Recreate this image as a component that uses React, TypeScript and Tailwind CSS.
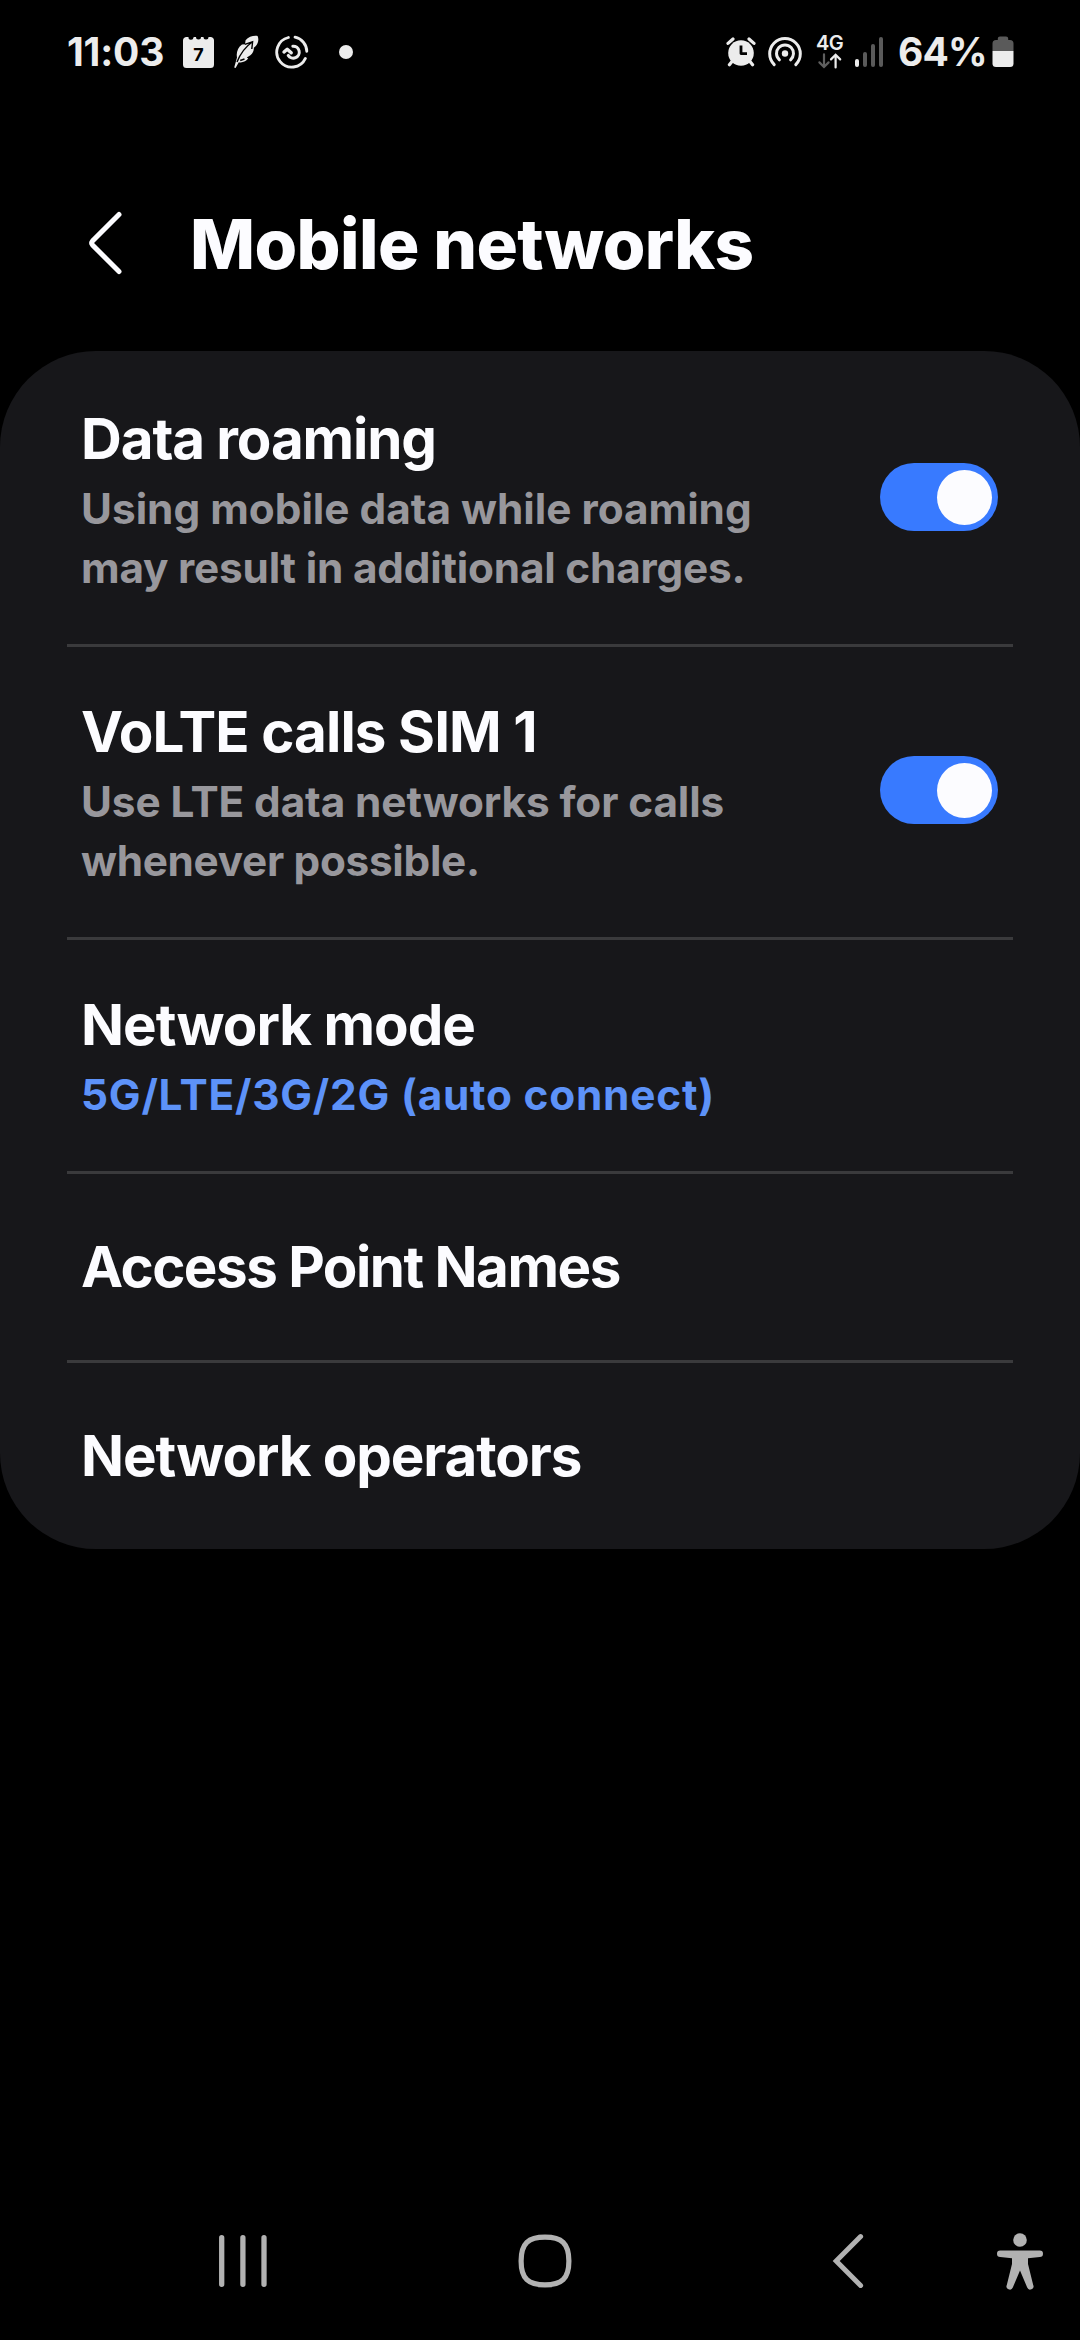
type Row = {
  title: string;
  titleClass: string;
  lines?: { text: string; className: string }[];
  height: string;
  toggle?: boolean;
};

const rows: Row[] = [
  {
    title: "Data roaming",
    titleClass: "tracking-[-1.1px]",
    lines: [
      { text: "Using mobile data while roaming", className: "text-[#98979c]" },
      {
        text: "may result in additional charges.",
        className: "text-[#98979c] tracking-[-0.2px]",
      },
    ],
    height: "h-[293px] pt-[54px]",
    toggle: true,
  },
  {
    title: "VoLTE calls SIM 1",
    titleClass: "tracking-[-0.9px]",
    lines: [
      {
        text: "Use LTE data networks for calls",
        className: "text-[#98979c] tracking-[-0.1px]",
      },
      {
        text: "whenever possible.",
        className: "text-[#98979c] tracking-[-0.3px]",
      },
    ],
    height: "h-[293px] pt-[54px]",
    toggle: true,
  },
  {
    title: "Network mode",
    titleClass: "tracking-[-1px]",
    lines: [
      {
        text: "5G/LTE/3G/2G (auto connect)",
        className: "text-[#5d92f8] tracking-[0.8px]",
      },
    ],
    height: "h-[234px] pt-[54px]",
  },
  {
    title: "Access Point Names",
    titleClass: "tracking-[-1.5px]",
    height: "h-[189px] pt-[62px]",
  },
  {
    title: "Network operators",
    titleClass: "tracking-[-1.1px]",
    height: "h-[189px] pt-[62px]",
  },
];

function Toggle() {
  return (
    <div className="mt-[58px] flex h-[68px] w-[118px] shrink-0 items-center justify-end rounded-full bg-[#387aff] pr-[6px]">
      <div className="h-[55px] w-[55px] rounded-full bg-[#fcfcff]" />
    </div>
  );
}

function StatusBar() {
  return (
    <div className="flex h-[104px] shrink-0 items-center pl-[67px] pr-[66px] text-[#ececec]">
      <span className="w-[116px] whitespace-nowrap text-[39px] font-bold leading-[104px] tracking-[-0.2px]">
        11:03
      </span>

      {/* calendar */}
      <div className="relative h-[31px] w-[31px]">
        <svg width="31" height="31" viewBox="0 0 31 31">
          <path
            d="M3 0H5.5A2.5 2.5 0 0 0 10.5 0.6L10.8 0H13A2.5 2.5 0 0 0 18 0H20.5A2.5 2.5 0 0 0 25.5 0H28Q31 0.5 31 3.5V27.5Q31 31 27.5 31H3.5Q0 31 0 27.5V3.5Q0 0.5 3 0Z"
            fill="#ececec"
          />
        </svg>
        <span className="absolute inset-x-0 top-[9px] text-center text-[18px] font-bold leading-[18px] text-black">
          7
        </span>
      </div>

      {/* feather */}
      <svg className="ml-[20px]" width="25" height="34" viewBox="0 0 25 34">
        <path
          d="M23.6 1C19.5 0.4 14.4 1.8 11.6 5.2L11 9.2L8 9.4C3.8 12.4 2 17.5 3 22.5L0.2 32.6L1.6 33L4.8 27.2C8 28 12.5 26.5 14.2 23.6L12.8 22.4L16.4 20.2C19 17.8 20 15.2 19.8 12.8L21.6 11.2C24.4 8.2 25 4 23.6 1Z"
          fill="#ececec"
        />
        <path
          d="M3 27C6 19.5 11 12.2 18.5 6.8M10.8 9.4L18.6 6.8L17.8 14M6.2 25.5L10.5 24"
          fill="none"
          stroke="#000"
          strokeWidth="1.4"
        />
      </svg>

      {/* sync ring */}
      <svg className="ml-[16px]" width="34" height="34" viewBox="0 0 34 34">
        <g fill="none" stroke="#ececec" strokeWidth="2.8" strokeLinecap="round">
          <path d="M20 2.2A14.8 14.8 0 0 1 31.8 16.4" />
          <path d="M30.4 23.4A15 15 0 1 1 13.4 2.5" />
          <path d="M17.8 11.2A6 6 0 1 1 13.2 20.4" strokeWidth="3" />
          <path d="M9 17L12.2 14.2L16.2 17.8" strokeWidth="3.4" strokeLinejoin="round" />
        </g>
      </svg>

      <div className="ml-[30px] h-[14px] w-[14px] rounded-full bg-[#ececec]" />

      <div className="ml-auto flex items-center">
        {/* alarm */}
        <svg width="30" height="30" viewBox="0 0 30 30">
          <circle cx="15" cy="16" r="12.8" fill="#ececec" />
          <g fill="none" stroke="#ececec" strokeWidth="3.2" strokeLinecap="round">
            <path d="M2 6.4L7 2M28 6.4L23 2M6 24.5L3.4 27.8M24 24.5L26.6 27.8" />
          </g>
          <path d="M15 8.6V16.6H21" fill="none" stroke="#000" strokeWidth="2.8" strokeLinejoin="round" />
        </svg>

        {/* hotspot */}
        <svg className="ml-[12px]" width="34" height="32" viewBox="0 0 34 32">
          <circle cx="17" cy="17.5" r="3.2" fill="#ececec" />
          <g fill="none" stroke="#ececec" strokeWidth="3" strokeLinecap="round">
            <path d="M6.2 28.6A15.3 15.3 0 1 1 27.8 28.6" />
            <path d="M11.4 23.8A8.5 8.5 0 1 1 22.6 23.8" />
          </g>
        </svg>

        {/* 4G with up / down arrows */}
        <div className="ml-[14px] flex w-[27px] flex-col items-center">
          <span className="whitespace-nowrap text-[20px] font-semibold leading-[16px] tracking-[-0.6px]">
            4G
          </span>
          <svg className="mt-[2px]" width="26" height="16" viewBox="0 0 26 16">
            <g fill="none" strokeWidth="2.2" strokeLinecap="round">
              <path d="M7 1.4V13.6M2.4 9.4L7 14L11.6 9.4" stroke="#5f5f5f" />
              <path d="M18.6 14.4V2.4M14 6.4L18.6 1.8L23.2 6.4" stroke="#ececec" />
            </g>
          </svg>
        </div>

        {/* signal strength */}
        <div className="ml-[12px] flex h-[30px] items-end gap-[4px]">
          <div className="h-[8px] w-[4px] rounded-full bg-[#ececec]" />
          <div className="h-[15px] w-[4px] rounded-full bg-[#5a5a5a]" />
          <div className="h-[23px] w-[4px] rounded-full bg-[#5a5a5a]" />
          <div className="h-[30px] w-[4px] rounded-full bg-[#5a5a5a]" />
        </div>

        <span className="ml-[15px] w-[94px] whitespace-nowrap text-[39px] font-bold leading-[104px] tracking-[-0.8px]">
          64%
        </span>

        {/* battery */}
        <svg width="22" height="32" viewBox="0 0 22 32">
          <path
            d="M0.5 15V7.5Q0.5 4 4 4H5.8V2.5Q5.8 0.5 8 0.5H14Q16.2 0.5 16.2 2.5V4H18Q21.5 4 21.5 7.5V15Z"
            fill="#5a5a5a"
          />
          <path d="M0.5 15H21.5V27.5Q21.5 31 18 31H4Q0.5 31 0.5 27.5Z" fill="#ececec" />
        </svg>
      </div>
    </div>
  );
}

function NavBar() {
  return (
    <div className="mt-auto mb-[46px] flex h-[66px] shrink-0 items-center pl-[218px]">
      <svg width="49" height="52" viewBox="0 0 49 52">
        <path
          d="M3.7 2.7V49.3M24.9 2.7V49.3M46 2.7V49.3"
          stroke="#b2b2b2"
          strokeWidth="5.3"
          strokeLinecap="round"
        />
      </svg>
      <svg className="ml-[251px]" width="54" height="54" viewBox="0 0 54 54">
        <path
          d="M27 3.1C43.5 3.1 50.9 9 50.9 27S43.5 50.9 27 50.9S3.1 45 3.1 27S10.5 3.1 27 3.1Z"
          fill="none"
          stroke="#b2b2b2"
          strokeWidth="5.2"
        />
      </svg>
      <svg className="ml-[260px]" width="32" height="56" viewBox="0 0 32 56">
        <path
          d="M28.6 3.6L4.2 28L28.6 52.4"
          fill="none"
          stroke="#b2b2b2"
          strokeWidth="5"
          strokeLinecap="round"
        />
      </svg>
      <svg className="ml-[132px]" width="48" height="58" viewBox="0 0 48 58">
        <circle cx="24" cy="8" r="6.8" fill="#b2b2b2" />
        <path
          d="M4.2 18.6H43.8A3.2 3.2 0 0 1 43.8 25L32 26.2V32L37.2 53A3.1 3.1 0 0 1 31.2 55.6L24 38.4L16.8 55.6A3.1 3.1 0 0 1 10.8 53L16 32V26.2L4.2 25A3.2 3.2 0 0 1 4.2 18.6Z"
          fill="#b2b2b2"
        />
      </svg>
    </div>
  );
}

export default function App() {
  return (
    <div className="flex h-[2340px] w-[1080px] flex-col overflow-hidden bg-black font-['Inter',sans-serif]">
      <StatusBar />

      <div className="flex h-[247px] shrink-0 items-start pl-[87px] pt-[98px]">
        <svg className="mt-[8px]" width="36" height="66" viewBox="0 0 36 66">
          <path
            d="M32 4.5L5.5 31Q3.8 33 5.5 35L32 61.5"
            fill="none"
            stroke="#fcfcff"
            strokeWidth="5"
            strokeLinecap="round"
          />
        </svg>
        <h1 className="ml-[67px] whitespace-nowrap text-[69px] font-extrabold leading-[84px] tracking-[-0.6px] text-[#fcfcff]">
          Mobile networks
        </h1>
      </div>

      <div className="h-[1198px] shrink-0 rounded-[96px] bg-[#17171a]">
        {rows.map((row, i) => (
          <div key={row.title}>
            {i > 0 && (
              <div className="mx-[67px] -mb-[3px] h-[3px] bg-[#3a3a3c]" />
            )}
            <div className={"flex items-start justify-between pl-[81px] pr-[82px] " + row.height}>
              <div className="whitespace-nowrap font-bold">
                <div className={"text-[56.5px] leading-[68px] text-[#fcfcff] " + row.titleClass}>
                  {row.title}
                </div>
                {row.lines && (
                  <div className="mt-[6px] text-[42.3px] leading-[59px]">
                    {row.lines.map((line) => (
                      <div key={line.text} className={line.className}>
                        {line.text}
                      </div>
                    ))}
                  </div>
                )}
              </div>
              {row.toggle && <Toggle />}
            </div>
          </div>
        ))}
      </div>

      <NavBar />
    </div>
  );
}
